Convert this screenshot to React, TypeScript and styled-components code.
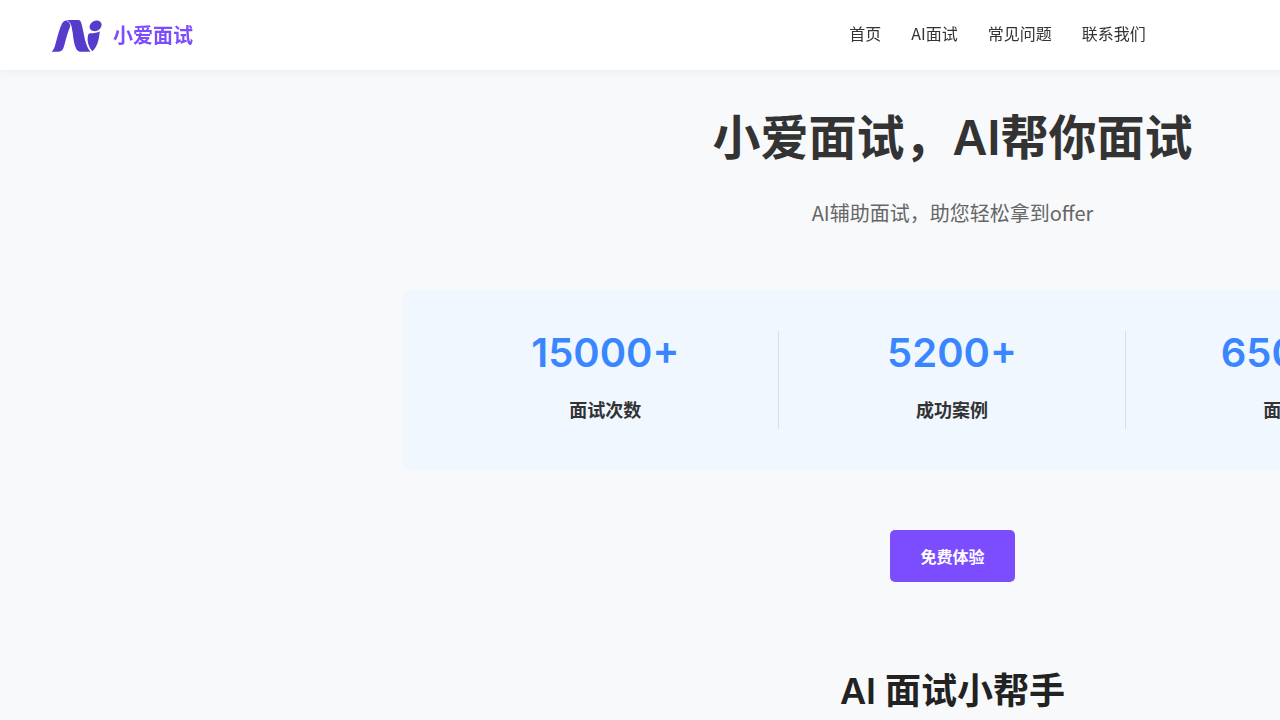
import React from "react";
import styled, { createGlobalStyle } from "styled-components";

const GlobalStyle = createGlobalStyle`
  * {
    box-sizing: border-box;
  }
  body {
    margin: 0;
    background: #f8f9fb;
    color: #333;
    font-family: "Noto Sans CJK SC", sans-serif;
    font-size: 16px;
    line-height: 24px;
  }
  h1, h2, p, dl, dd {
    margin: 0;
  }
`;

const Page = styled.div`
  min-width: 1905px;
`;

const Header = styled.header`
  position: sticky;
  top: 0;
  z-index: 1;
  display: flex;
  align-items: center;
  height: 70px;
  padding: 0 103px 0 50px;
  background: #fff;
  box-shadow: 0 2px 10px rgba(0, 0, 0, 0.05);
`;

const Brand = styled.a`
  display: flex;
  align-items: center;
  gap: 10px;
  color: #7c4dff;
  font-size: 20px;
  font-weight: 700;
  text-decoration: none;
`;

const LogoMark = styled.svg`
  display: block;
  width: 53px;
  height: 40px;
`;

const Nav = styled.nav`
  display: flex;
  flex: 1;
  justify-content: center;
  gap: 30px;
  padding-bottom: 4px;
`;

const NavLink = styled.a`
  color: #333;
  text-decoration: none;
`;

const Main = styled.main`
  display: flex;
  flex-direction: column;
  align-items: center;
  padding: 32px 20px 60px;
  text-align: center;
`;

const Title = styled.h1`
  font-family: Inter, "Noto Sans CJK SC", sans-serif;
  font-size: 48px;
  font-weight: 600;
  line-height: 72px;
`;

const Subtitle = styled.p`
  margin-top: 24px;
  color: #666;
  font-size: 20px;
  line-height: 30px;
`;

const Stats = styled.dl`
  display: grid;
  grid-template-columns: repeat(3, 1fr);
  width: 100%;
  max-width: 1100px;
  margin-top: 62px;
  padding: 41px 30px;
  border-radius: 10px;
  background: #f0f7ff;
`;

const Stat = styled.div`
  display: flex;
  flex-direction: column-reverse;
  justify-content: flex-end;
  gap: 20px;
  border-right: 1px solid #ddd;

  &:last-child {
    border-right: 0;
  }
`;

const StatValue = styled.dd`
  color: #3a86ff;
  font-family: Inter, sans-serif;
  font-size: 40px;
  font-weight: 600;
  line-height: 44px;
`;

const StatLabel = styled.dt`
  height: 34px;
  font-size: 18px;
  font-weight: 700;
  line-height: 28px;
`;

const TrialButton = styled.button`
  height: 52px;
  margin-top: 60px;
  padding: 0 30px;
  border: 0;
  border-radius: 5px;
  background: #7c4dff;
  color: #fff;
  font: inherit;
  font-weight: 700;
  cursor: pointer;
`;

const SectionTitle = styled.h2`
  margin-top: 82px;
  color: #222;
  font-family: Inter, "Noto Sans CJK SC", sans-serif;
  font-size: 36px;
  font-weight: 600;
  line-height: 54px;
`;

const links = ["首页", "AI面试", "常见问题", "联系我们"];

const stats = [
  { value: "15000+", label: "面试次数" },
  { value: "5200+", label: "成功案例" },
  { value: "65000+", label: "面试题库" },
];

export default function App() {
  return (
    <Page>
      <GlobalStyle />
      <Header>
        <Brand href="#">
          <LogoMark viewBox="0 0 53 40" aria-hidden="true">
            <g fill="#573ccb">
              <path d="M1.500 36.800C4 35 5 31 6 27C8 20 9.500 13.500 12 8.500C13.500 5.500 16 5 19 5C21 6.500 21.200 9 20 12C18 17 16.500 22 15 27.500C13.800 33 12.500 36.800 8.500 36.800Z" />
              <path d="M18 5H28C30.500 5 31 7 31.700 9.500C34 18 35 31 40.500 36.800H31C27.500 36.800 26 34 24.700 30C22.500 21 22.500 9 18 5Z" />
              <path d="M38.500 19C41 17.500 44 19 49.800 16.500C48.800 25 47.500 32 42.300 36.200C38 31 36.500 25 38.500 19Z" />
              <ellipse cx="45.600" cy="10.800" rx="6.300" ry="5" transform="rotate(-30 45.600 10.800)" />
            </g>
            <path d="M16.500 5.500C21.500 7 21.300 14 22.500 21" fill="none" stroke="#fff" strokeWidth="0.700" />
          </LogoMark>
          小爱面试
        </Brand>
        <Nav>
          {links.map((text) => (
            <NavLink href="#" key={text}>
              {text}
            </NavLink>
          ))}
        </Nav>
      </Header>
      <Main>
        <Title>小爱面试，AI帮你面试</Title>
        <Subtitle>AI辅助面试，助您轻松拿到offer</Subtitle>
        <Stats>
          {stats.map(({ value, label }) => (
            <Stat key={label}>
              <StatLabel>{label}</StatLabel>
              <StatValue>{value}</StatValue>
            </Stat>
          ))}
        </Stats>
        <TrialButton type="button">免费体验</TrialButton>
        <SectionTitle>AI 面试小帮手</SectionTitle>
      </Main>
    </Page>
  );
}
